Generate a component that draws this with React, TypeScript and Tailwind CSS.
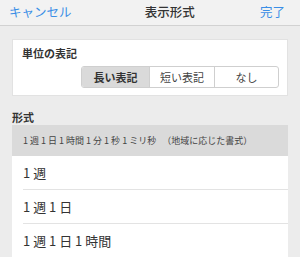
const font = { fontFamily: '"Noto Sans CJK JP", "Liberation Sans", sans-serif' };

const rows = ['1 週', '1 週 1 日', '1 週 1 日 1 時間'];

function Header() {
  return (
    <div className="flex h-[26px] items-center justify-between border-b border-[#d2d2d2] bg-[#f2f2f2] pl-[9px] pr-[15px] text-[12.5px]">
      <span className="text-[#3a8ee6]">キャンセル</span>
      <span className="ml-[8px] font-medium text-[#333]">表示形式</span>
      <span className="text-[#3a8ee6]">完了</span>
    </div>
  );
}

function UnitCard() {
  return (
    <div className="mx-3 mt-[13px] h-[57px] border border-[#e2e2e2] bg-white px-[9px] pt-[5px]">
      <div className="text-[11px] font-bold leading-[16px] text-[#333]">単位の表記</div>
      <div className="ml-[59px] mt-[5px] flex h-[22px] w-[198px] overflow-hidden rounded-[3px] border border-[#cfcfcf] text-[11px] text-[#444]">
        <div className="flex w-[67px] items-center justify-center bg-[#dadada] font-bold text-[#333]">長い表記</div>
        <div className="flex w-[65px] items-center justify-center border-l border-[#cfcfcf]">短い表記</div>
        <div className="flex flex-1 items-center justify-center border-l border-[#cfcfcf]">なし</div>
      </div>
    </div>
  );
}

export default function App() {
  return (
    <div className="h-[257px] w-[300px] overflow-hidden bg-[#ececec]" style={font}>
      <Header />
      <UnitCard />
      <div className="mt-[13px] px-3 text-[11px] font-bold leading-[16px] text-[#333]">形式</div>
      <div className="mx-3 bg-white">
        <div className="flex h-[31px] items-center bg-[#dadada] pl-[11px] text-[9px] text-[#444]">
          <span>1 週 1 日 1 時間 1 分 1 秒 1 ミリ秒</span>
          <span className="ml-[6px]">（地域に応じた書式）</span>
        </div>
        {rows.map((r) => (
          <div key={r} className="pl-[11px]">
            <div className="flex h-[34px] items-center border-b border-[#e3e3e3] text-[13px] text-[#333]">{r}</div>
          </div>
        ))}
      </div>
    </div>
  );
}
